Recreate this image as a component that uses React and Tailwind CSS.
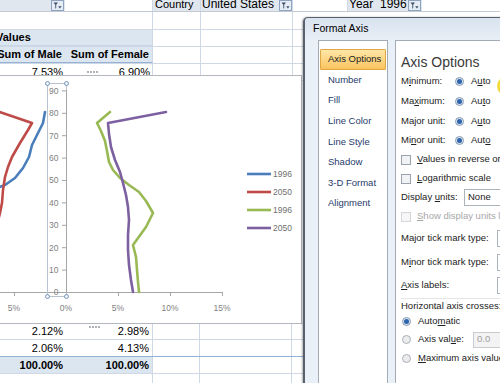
import React from "react";

const FilterButton = () => (
  <div className="w-[13px] h-[11px] border border-[#8ea3bf] bg-[#e6ecf4] flex items-center justify-center">
    <svg width="9" height="8" viewBox="0 0 9 8">
      <path d="M0.5 0.5h4.5l-1.8 2.2v3.3l-0.9 0.8v-4.1z" fill="#3d4f69" />
      <path d="M5.2 4.2h3.4l-1.7 2.4z" fill="#3d4f69" />
    </svg>
  </div>
);

const Sheet = () => (
  <div className="flex flex-col w-[500px] text-[11px] text-black">
    {/* page fields row */}
    <div className="flex h-[12px] border-b border-[#c3cad4] leading-[11px]">
      <div className="w-[65px] bg-[#e1e7ef] flex justify-end items-start pr-[1px]">
        <FilterButton />
      </div>
      <div className="w-[88px] border-r border-[#d0d7e5]" />
      <div className="w-[48px] bg-[#e1e7ef] pl-[2px] border-r border-[#d0d7e5] -mt-[1px]">Country</div>
      <div className="w-[92px] bg-[#e1e7ef] flex justify-between border-r border-[#d0d7e5]">
        <span className="pl-[1px] -mt-[1px] text-[12px]">United States</span>
        <FilterButton />
      </div>
      <div className="w-[55px] border-r border-[#d0d7e5]" />
      <div className="w-[30px] bg-[#e1e7ef] pl-[1px] -mt-[1px] text-[12px]">Year</div>
      <div className="w-[44px] bg-[#e1e7ef] flex justify-between pr-[1px]">
        <span className="pl-[2px] -mt-[1px] text-[12px]">1996</span>
        <FilterButton />
      </div>
      <div className="flex-1" />
    </div>

    <div className="flex h-[18px] border-b border-[#d0d7e5]">
      <div className="w-[65px]" />
      <div className="w-[88px] border-r border-[#d0d7e5]" />
      <div className="w-[48px] border-r border-[#d0d7e5]" />
      <div className="w-[92px] border-r border-[#d0d7e5]" />
      <div className="flex-1" />
    </div>

    <div className="flex h-[17px] border-b border-[#d0d7e5]">
      <div className="w-[153px] bg-[#dce6f1] border-b border-[#c6d5e8] border-r border-r-[#d0d7e5] flex items-center font-bold">
        <span className="-ml-[4px]">Values</span>
      </div>
      <div className="w-[48px] border-r border-[#d0d7e5]" />
      <div className="w-[92px] border-r border-[#d0d7e5]" />
      <div className="flex-1" />
    </div>

    <div className="flex h-[17px] border-b border-[#d0d7e5]">
      <div className="w-[65px] bg-[#dce6f1] border-b border-[#95b3d7] flex items-center justify-end pr-[3px] font-bold whitespace-nowrap overflow-visible">
        Sum of Male
      </div>
      <div className="w-[88px] bg-[#dce6f1] border-b border-[#95b3d7] border-r border-r-[#d0d7e5] flex items-center justify-end pr-[3px] font-bold whitespace-nowrap">
        Sum of Female
      </div>
      <div className="w-[48px] border-r border-[#d0d7e5]" />
      <div className="w-[92px] border-r border-[#d0d7e5]" />
      <div className="flex-1" />
    </div>

    <div className="flex h-[17px] border-b border-[#d0d7e5]">
      <div className="w-[65px] flex items-center justify-end pr-[2px]">7.53%</div>
      <div className="w-[88px] flex items-center justify-end pr-[2px] border-r border-[#d0d7e5]">6.90%</div>
      <div className="w-[48px] border-r border-[#d0d7e5]" />
      <div className="w-[92px] border-r border-[#d0d7e5]" />
      <div className="flex-1" />
    </div>

    {/* rows hidden behind the chart */}
    <div className="h-[242px]" />

    <div className="flex h-[17px] border-b border-[#d0d7e5] border-t">
      <div className="w-[65px] flex items-center justify-end pr-[2px]">2.12%</div>
      <div className="w-[88px] flex items-center justify-end pr-[3px] border-r border-[#d0d7e5]">2.98%</div>
      <div className="w-[47px] border-r border-[#d0d7e5]" />
      <div className="w-[92px] border-r border-[#d0d7e5]" />
      <div className="flex-1" />
    </div>
    <div className="flex h-[17px] border-b border-[#95b3d7]">
      <div className="w-[65px] flex items-center justify-end pr-[2px]">2.06%</div>
      <div className="w-[88px] flex items-center justify-end pr-[3px] border-r border-[#d0d7e5]">4.13%</div>
      <div className="w-[47px] border-r border-[#d0d7e5]" />
      <div className="w-[92px] border-r border-[#d0d7e5]" />
      <div className="flex-1" />
    </div>
    <div className="flex h-[17px] border-b border-[#d0d7e5] font-bold">
      <div className="w-[65px] bg-[#dce6f1] flex items-center justify-end pr-[2px]">100.00%</div>
      <div className="w-[88px] bg-[#dce6f1] flex items-center justify-end pr-[3px] border-r border-[#d0d7e5]">100.00%</div>
      <div className="w-[47px] border-r border-[#d0d7e5]" />
      <div className="w-[92px] border-r border-[#d0d7e5]" />
      <div className="flex-1" />
    </div>
    <div className="flex h-[17px]">
      <div className="w-[153px] border-r border-[#d0d7e5]" />
      <div className="w-[47px] border-r border-[#d0d7e5]" />
      <div className="w-[92px] border-r border-[#d0d7e5]" />
    </div>
  </div>
);

const series = [
  { color: "#4a7ebb", pts: "45,112 43,123 38,133 32,145 29,157 23,168 15,178 5,185 -3,188" },
  { color: "#be4b48", pts: "-3,111 32,123 28,130 20,143 12,157 8,167 5,177 3,190 2,203 0,213 -3,225" },
  { color: "#98b954", pts: "110,112 97,123 101,131 105,141 107,151 109,162 113,170 120,178 129,185 139,192 146,201 153,213 146,227 133,245 136,257 137,270 138,282 139,292" },
  { color: "#7d60a0", pts: "166,112 108,123 109,134 111,147 115,160 120,172 123,183 126,195 128,207 129,220 128,235 128,250 129,265 131,280 133,292" },
];

const legend = [
  { color: "#4a7ebb", label: "1996" },
  { color: "#be4b48", label: "2050" },
  { color: "#98b954", label: "1996" },
  { color: "#7d60a0", label: "2050" },
];

const Chart = () => {
  const ticks = [0, 1, 2, 3, 4, 5, 6, 7, 8, 9];
  const xs = [
    { x: 14, t: "5%" },
    { x: 66, t: "0%" },
    { x: 118, t: "5%" },
    { x: 170, t: "10%" },
    { x: 222, t: "15%" },
  ];
  return (
    <svg
      className="absolute left-0 top-[68px]"
      width="306"
      height="262"
      viewBox="0 68 306 262"
      fontFamily="'Liberation Sans', Arial, sans-serif"
    >
      <rect x="-1" y="75.5" width="302.5" height="248" fill="white" stroke="#b3b8bf" />
      {[88, 91, 94, 97].map((x) => (
        <circle key={"t" + x} cx={x} cy="72" r="0.9" fill="#8a8f96" />
      ))}
      {[90, 93, 96, 99].map((x) => (
        <circle key={"b" + x} cx={x} cy="327" r="0.9" fill="#8a8f96" />
      ))}

      {/* horizontal axis */}
      <line x1="-2" y1="292.5" x2="222.5" y2="292.5" stroke="#a6a6a6" />
      {xs.map((d) => (
        <g key={d.x}>
          <line x1={d.x + 0.5} y1="292" x2={d.x + 0.5} y2="296" stroke="#a6a6a6" />
          <text x={d.x} y="311" fontSize="8.5" fill="#7f7f7f" textAnchor="middle">
            {d.t}
          </text>
        </g>
      ))}

      {/* vertical axis (selected) */}
      <rect x="47.5" y="83.5" width="19" height="213" fill="none" stroke="#b9c3cf" />
      <line x1="66.5" y1="90" x2="66.5" y2="292" stroke="#a6a6a6" />
      {ticks.map((k) => {
        const y = 292 - k * 22.4;
        return (
          <g key={k}>
            <line x1="62" y1={y + 0.5} x2="66.5" y2={y + 0.5} stroke="#a6a6a6" />
            <text x="58.5" y={y + 3.3} fontSize="8.5" fill="#7f7f7f" textAnchor="end">
              {k * 10}
            </text>
          </g>
        );
      })}
      {[
        [47.5, 83.5],
        [66.5, 83.5],
        [47.5, 296.5],
        [66.5, 296.5],
      ].map(([x, y]) => (
        <circle key={x + "-" + y} cx={x} cy={y} r="2" fill="#eef3f9" stroke="#6e8fb8" strokeWidth="0.9" />
      ))}

      {series.map((s, i) => (
        <polyline
          key={i}
          points={s.pts}
          fill="none"
          stroke={s.color}
          strokeWidth="2.6"
          strokeLinejoin="round"
          strokeLinecap="round"
        />
      ))}

      {legend.map((l, i) => {
        const y = 174 + i * 18;
        return (
          <g key={i}>
            <line x1="247" y1={y} x2="271" y2={y} stroke={l.color} strokeWidth="2.6" />
            <text x="273" y={y + 3} fontSize="8.5" fill="#6f6f6f">
              {l.label}
            </text>
          </g>
        );
      })}
    </svg>
  );
};

const Radio = ({ on }) =>
  on ? (
    <div className="w-[9px] h-[9px] rounded-full border border-[#8a9db5] bg-[#d7e2ee] flex items-center justify-center shrink-0">
      <div className="w-[5px] h-[5px] rounded-full bg-[#2d64ab]" />
    </div>
  ) : (
    <div className="w-[9px] h-[9px] rounded-full border border-[#a9b1bb] bg-[#ececec] shrink-0" />
  );

const Check = ({ disabled }) => (
  <div
    className={
      disabled
        ? "w-[10px] h-[10px] border border-[#d3d7dc] bg-[#f6f6f6] shrink-0"
        : "w-[10px] h-[10px] border border-[#9aa3ad] bg-[#f1f2f4] shrink-0"
    }
  />
);

const AutoRow = ({ label, auto, h }) => (
  <div className={`flex items-center ${h}`}>
    <span className="w-[54px] whitespace-nowrap">{label}</span>
    <Radio on />
    <span className="ml-[7px]">{auto}</span>
  </div>
);

const navItems = ["Number", "Fill", "Line Color", "Line Style", "Shadow", "3-D Format", "Alignment"];

const FormatAxis = () => (
  <div className="absolute left-[303px] top-[17px] w-[220px] h-[380px] rounded-tl-[5px] border border-l-2 border-[#58616d] bg-[#eaf0f7] flex flex-col shadow-[-1px_0_2px_rgba(0,0,0,0.3)] text-[9.5px]">
    <div className="h-[22px] pl-[8px] flex items-center text-[10.5px] text-black bg-gradient-to-b from-[#d9e3ef] to-[#e7eef6] rounded-tl-[4px]">
      Format Axis
    </div>
    <div className="flex flex-1 pl-[13px] gap-[7px]">
      <div className="w-[70px] border border-[#a3acb6] bg-white pt-[8px] px-[1px] text-[#1f3b6b]">
        <div className="h-[20.6px] flex items-center pl-[7px] border border-[#e0a743] rounded-[1px] bg-gradient-to-b from-[#fde7a6] to-[#fac45e] text-[#202020]">
          Axis Options
        </div>
        {navItems.map((n) => (
          <div key={n} className="h-[20.6px] flex items-center pl-[8px]">
            {n}
          </div>
        ))}
      </div>
      <div className="flex-1 border border-r-0 border-[#a3acb6] bg-white pl-[5px] text-[#222] whitespace-nowrap overflow-hidden">
        <div className="h-[30px] pt-[14px] text-[14px] leading-[14px] text-[#3a3a3a]">Axis Options</div>
        <AutoRow h="h-[20px]" label={<>M<u>i</u>nimum:</>} auto={<>A<u>u</u>to</>} />
        <AutoRow h="h-[20px]" label={<>Ma<u>x</u>imum:</>} auto={<>Au<u>t</u>o</>} />
        <AutoRow h="h-[20px]" label={<>Ma<u>j</u>or unit:</>} auto={<>A<u>u</u>to</>} />
        <AutoRow h="h-[19px]" label={<>Mi<u>n</u>or unit:</>} auto={<>Aut<u>o</u></>} />
        <div className="flex items-center h-[19px] gap-[6px]">
          <Check />
          <span>
            <u>V</u>alues in reverse order
          </span>
        </div>
        <div className="flex items-center h-[19px] gap-[6px]">
          <Check />
          <span>
            <u>L</u>ogarithmic scale
          </span>
          <span className="ml-[10px]">Base:</span>
        </div>
        <div className="flex items-center h-[19px]">
          <span className="w-[63px]">
            Display <u>u</u>nits:
          </span>
          <div className="h-[17px] flex-1 border border-r-0 border-[#abb3bd] flex items-center pl-[3px]">None</div>
        </div>
        <div className="flex items-center h-[19px] gap-[6px] text-[#a8a8a8]">
          <Check disabled />
          <span>
            <u>S</u>how display units label on chart
          </span>
        </div>
        <div className="flex items-center h-[24px]">
          <span className="w-[96px]">
            Ma<u>j</u>or tick mark type:
          </span>
          <div className="h-[17px] flex-1 border border-r-0 border-[#abb3bd]" />
        </div>
        <div className="flex items-center h-[24px]">
          <span className="w-[96px]">
            M<u>i</u>nor tick mark type:
          </span>
          <div className="h-[17px] flex-1 border border-r-0 border-[#abb3bd]" />
        </div>
        <div className="flex items-center h-[22px]">
          <span className="w-[96px]">
            <u>A</u>xis labels:
          </span>
          <div className="h-[17px] flex-1 border border-r-0 border-[#abb3bd]" />
        </div>
        <div className="mt-[2px] border-t border-[#e3e6ea] h-[15px] flex items-center">Horizontal axis crosses:</div>
        <div className="flex items-center h-[17px] gap-[7px] pl-[1px]">
          <Radio on />
          <span>
            Auto<u>m</u>atic
          </span>
        </div>
        <div className="flex items-center h-[19px] pl-[1px]">
          <Radio />
          <span className="ml-[7px] w-[55px]">
            Axis val<u>u</u>e:
          </span>
          <div className="h-[16px] flex-1 border border-r-0 border-[#c9cdd2] bg-[#f3f3f3] text-[#a0a0a0] flex items-center pl-[3px]">
            0.0
          </div>
        </div>
        <div className="flex items-center h-[18px] gap-[7px] pl-[1px]">
          <Radio />
          <span>
            <u>M</u>aximum axis value
          </span>
        </div>
      </div>
    </div>
  </div>
);

export default function App() {
  return (
    <div className="relative w-[500px] h-[383px] overflow-hidden bg-white font-['Liberation_Sans',Arial,sans-serif]">
      <Sheet />
      <Chart />
      <FormatAxis />
      <div className="absolute left-[497px] top-[76px] w-[20px] h-[20px] rounded-full bg-[#f3dc3a]" />
    </div>
  );
}
